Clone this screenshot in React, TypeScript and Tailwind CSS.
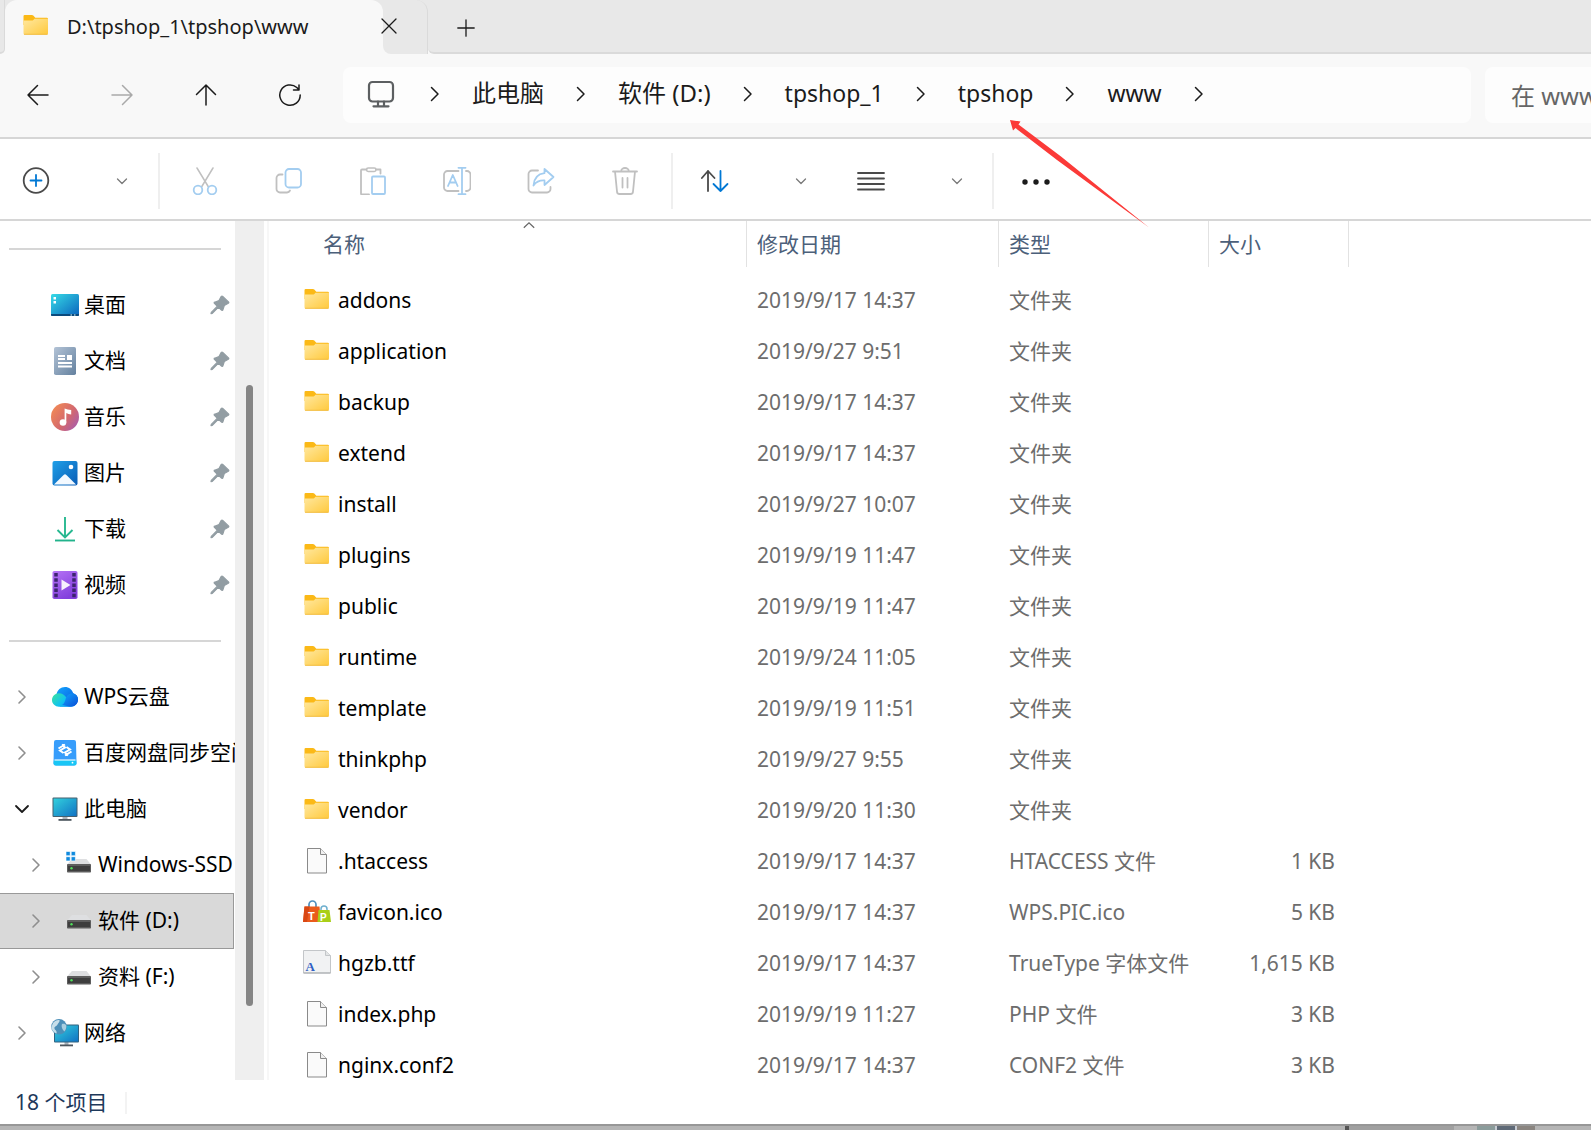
import type { ComponentType, ReactNode } from "react";

type IconProps = { className?: string };
type FileKind = "folder" | "blank" | "favicon" | "font";
type FileRow = { name: string; date: string; type: string; size?: string; kind: FileKind };
type TreeItem = { label: string; icon: ComponentType; state: "open" | "closed"; child?: boolean; selected?: boolean };

/* ---------- small line icons ---------- */

function Stroke({ children, size = 28, className = "text-[#1b1b1b]" }: { children: ReactNode; size?: number; className?: string }) {
  return (
    <svg
      width={size}
      height={size}
      viewBox={`0 0 ${size} ${size}`}
      fill="none"
      stroke="currentColor"
      strokeWidth="1.5"
      strokeLinecap="round"
      strokeLinejoin="round"
      className={`shrink-0 ${className}`}
      aria-hidden="true"
    >
      {children}
    </svg>
  );
}

function ChevronRight({ className }: IconProps) {
  return (
    <Stroke size={16} className={className}>
      <path d="M4.500 1.500 11 8l-6.500 6.500" />
    </Stroke>
  );
}

function ChevronDown({ className }: IconProps) {
  return (
    <Stroke size={16} className={className}>
      <path d="M3.500 6 8 10.500 12.500 6" strokeWidth="1.300" />
    </Stroke>
  );
}

function TreeChevron({ open }: { open: boolean }) {
  return open ? (
    <Stroke size={16} className="text-[#1b1b1b]">
      <path d="M2 5l6 6 6-6" strokeWidth="1.800" />
    </Stroke>
  ) : (
    <Stroke size={16} className="text-[#8f8f8f]">
      <path d="M5 2l6 6-6 6" strokeWidth="1.600" />
    </Stroke>
  );
}

/* ---------- coloured icons ---------- */

function FolderIcon() {
  return (
    <svg width="28" height="28" viewBox="0 2 28 28" className="shrink-0" aria-hidden="true">
      <defs>
        <linearGradient id="folder" x1="0" y1="0" x2="1" y2="1">
          <stop offset="0" stopColor="#ffe8a0" />
          <stop offset="1" stopColor="#ffc93c" />
        </linearGradient>
      </defs>
      <path d="M1.500 5.200a1.200 1.200 0 0 1 1.200-1.200h7.200c.6 0 1 .2 1.400.6l2 2.200h11.500a1.200 1.200 0 0 1 1.200 1.200V14h-24.500z" fill="#fbb917" />
      <path d="M1.500 9.500h8.200c.7 0 1.200-.2 1.700-.6l1-1.100h13.600v14.500a1.500 1.500 0 0 1-1.500 1.500h-21.500a1.500 1.500 0 0 1-1.500-1.500z" fill="url(#folder)" />
      <path d="M2 23.300h23.500" stroke="#f0b93e" strokeWidth=".8" />
    </svg>
  );
}

function BlankFileIcon() {
  return (
    <svg width="28" height="28" viewBox="0 1 28 28" className="shrink-0" aria-hidden="true">
      <path d="M4.500 1.500h13l6 6v18.500h-19z" fill="#fafafa" stroke="#8a8a8a" />
      <path d="M17.500 1.500v6h6" fill="#f0f0f0" stroke="#8a8a8a" />
    </svg>
  );
}

function FaviconIcon() {
  return (
    <svg width="28" height="28" viewBox="0 0 28 28" className="shrink-0" aria-hidden="true">
      <path d="M6 9V5.500a3.500 3.500 0 0 1 7 0V9" fill="none" stroke="#4f8fbd" strokeWidth="1.700" />
      <path d="M1.500 7.500h15l1.500 15.500H0z" fill="#ea5b1c" />
      <path d="M1.500 7.500h5L4 23H0z" fill="#d94713" />
      <path d="M18 12.500V10a3 3 0 0 1 6 0v2.500" fill="none" stroke="#6fb0cf" strokeWidth="1.500" />
      <path d="M15.500 11h11L28 23H14.500z" fill="#a9cf18" />
      <text x="5" y="20.500" fontFamily="Liberation Sans, sans-serif" fontWeight="700" fontSize="11" fill="#fff">T</text>
      <text x="17" y="21.500" fontFamily="Liberation Sans, sans-serif" fontWeight="700" fontSize="10" fill="#fff">P</text>
    </svg>
  );
}

function FontFileIcon() {
  return (
    <svg width="28" height="28" viewBox="0 2 28 28" className="shrink-0" aria-hidden="true">
      <path d="M.5 2.500h22l5 5v17.500H.5z" fill="#f1f2f3" stroke="#c3c6c9" />
      <path d="M22.500 2.500v5h5" fill="#e3e5e6" stroke="#c3c6c9" />
      <path d="M.5 25h27" stroke="#a5a8ab" />
      <text x="2.500" y="22.500" fontFamily="Liberation Serif, serif" fontWeight="700" fontSize="13" fill="#2f5fc4">A</text>
    </svg>
  );
}

function DesktopIcon() {
  return (
    <svg width="28" height="28" viewBox="0 0 28 28" aria-hidden="true">
      <defs>
        <linearGradient id="desktop" x1="0" y1="0" x2="1" y2="1">
          <stop offset="0" stopColor="#36dbe6" />
          <stop offset="1" stopColor="#0b63bd" />
        </linearGradient>
      </defs>
      <rect y="3" width="28" height="22" rx="1.500" fill="url(#desktop)" />
      <path d="M0 23h28v1a1 1 0 0 1-1 1H1a1 1 0 0 1-1-1z" fill="#0b4a7d" />
      <path d="M2.500 6H5v2.500H2.500zM2.500 10H5v2.500H2.500z" fill="#fff" />
      <path d="M19.500 23.500h1.500v1h-1.500zM23 23.500h1.500v1H23z" fill="#dff" />
    </svg>
  );
}

function DocumentIcon() {
  return (
    <svg width="28" height="28" viewBox="0 0 28 28" aria-hidden="true">
      <defs>
        <linearGradient id="document" x1="0" y1="0" x2="1" y2="1">
          <stop offset="0" stopColor="#b3c3d6" />
          <stop offset="1" stopColor="#64819f" />
        </linearGradient>
      </defs>
      <rect x="3" width="22" height="28" rx="1.800" fill="url(#document)" />
      <path d="M7 9h7M7 12h7M7 16h14M7 19.500h14" stroke="#fff" strokeWidth="1.800" />
      <rect x="16" y="8" width="5" height="5" fill="#fff" />
    </svg>
  );
}

function MusicIcon() {
  return (
    <svg width="28" height="28" viewBox="0 0 28 28" aria-hidden="true">
      <defs>
        <linearGradient id="music" x1="0" y1="0.200" x2="1" y2="0.900">
          <stop offset="0" stopColor="#f28a55" />
          <stop offset=".55" stopColor="#d3686e" />
          <stop offset="1" stopColor="#a35bb5" />
        </linearGradient>
      </defs>
      <circle cx="14" cy="14" r="14" fill="url(#music)" />
      <circle cx="12" cy="19.500" r="3.300" fill="#fff" />
      <path d="M13.600 19.500V5.500c2 .8 4 1.200 6.600 1.500v4.500c-2-.2-3.400-.7-4.900-1.500v9.500z" fill="#fff" />
    </svg>
  );
}

function PictureIcon() {
  return (
    <svg width="28" height="28" viewBox="0 0 28 28" aria-hidden="true">
      <defs>
        <linearGradient id="picture" x1="0" y1="0" x2="1" y2="1">
          <stop offset="0" stopColor="#1fa0e8" />
          <stop offset="1" stopColor="#0a5cb5" />
        </linearGradient>
      </defs>
      <rect x="1.500" y="2" width="25" height="24.500" rx="2" fill="url(#picture)" />
      <circle cx="20" cy="8" r="2.300" fill="#fff" />
      <path d="M3 25.500 12.600 16a2 2 0 0 1 2.800 0L25 25.500z" fill="#f3f9ff" />
    </svg>
  );
}

function DownloadIcon() {
  return (
    <svg width="28" height="28" viewBox="0 0 28 28" fill="none" strokeWidth="1.900" aria-hidden="true">
      <path d="M14 2v20.500M6.500 15l7.500 7.500 7.500-7.500" stroke="#27b890" />
      <path d="M4 25.500h20" stroke="#22b38c" />
    </svg>
  );
}

function VideoIcon() {
  return (
    <svg width="28" height="28" viewBox="0 0 28 28" aria-hidden="true">
      <defs>
        <linearGradient id="video" x1="0" y1="0" x2="0.500" y2="1">
          <stop offset="0" stopColor="#b573f5" />
          <stop offset="1" stopColor="#8340dd" />
        </linearGradient>
      </defs>
      <rect x="1.500" width="25" height="28" rx="1.800" fill="url(#video)" />
      <path d="M5 2v25M23 2v25" stroke="#3d2470" strokeWidth="3.500" strokeDasharray="3.500 1.700" />
      <path d="M10.500 8.500 19.500 14l-9 5.500z" fill="#f6effc" />
    </svg>
  );
}

function CloudIcon() {
  return (
    <svg width="28" height="28" viewBox="0 0 28 28" aria-hidden="true">
      <defs>
        <linearGradient id="cloud-l" x1="0" y1="0.200" x2="1" y2="0.800">
          <stop offset="0" stopColor="#35e0a8" />
          <stop offset=".5" stopColor="#12c3ee" />
          <stop offset="1" stopColor="#0b8dfb" />
        </linearGradient>
        <linearGradient id="cloud-r" x1="0" y1="0" x2="1" y2="1">
          <stop offset="0" stopColor="#12a5ff" />
          <stop offset="1" stopColor="#0a4fd6" />
        </linearGradient>
      </defs>
      <path d="M5.500 11.500C6.200 7 9.700 4 14 4c4 0 7.200 2.500 8.200 6.300 2.900.8 4.800 3.200 4.800 6.200 0 4-3 7-7 7H9z" fill="url(#cloud-r)" />
      <path d="M8 10.200c3 0 5 1.300 6.500 3.300l4.500 5.500c2 2.500 4 4 6 2.500-1.400 1.500-3 2.200-5 2.200H8C4.300 23.700 1 20.800 1 17s3-6.800 7-6.800z" fill="url(#cloud-l)" />
      <path d="M15 14.500c2-3.500 4.500-4.500 7.200-4.200 2.900.8 4.800 3.200 4.800 6.200 0 4-3 7-7 7-4.500 0-6-1.500-9-1.500 3-1.500 3.500-6 4-7.500z" fill="url(#cloud-r)" />
    </svg>
  );
}

function BaiduDriveIcon() {
  return (
    <svg width="28" height="28" viewBox="0 0 28 28" aria-hidden="true">
      <path d="M5 1h18a2 2 0 0 1 2 2l.5 21a2.500 2.500 0 0 1-2.500 2.500H5A2.500 2.500 0 0 1 2.500 24L3 3a2 2 0 0 1 2-2z" fill="#379dfb" />
      <path d="M3 21h22l.5 3a2.500 2.500 0 0 1-2.500 2.500H5A2.500 2.500 0 0 1 2.500 24z" fill="#19c6f5" />
      <path d="M3.500 21h21" stroke="#e9fbff" strokeWidth="1.200" />
      <circle cx="21.500" cy="23.700" r=".9" fill="#fff" />
      <path d="M11 5.500l3 3-5 3 3.500 2.500M17 16.500l-3-3 5-3-3.500-2.500M7.500 9.500l6.500-4M20.500 12.500l-6.500 4" fill="none" stroke="#fff" strokeWidth="2" />
    </svg>
  );
}

function ThisPcIcon() {
  return (
    <svg width="28" height="28" viewBox="0 0 28 28" aria-hidden="true">
      <defs>
        <linearGradient id="pc" x1="0" y1="0" x2="1" y2="1">
          <stop offset="0" stopColor="#32d0dd" />
          <stop offset="1" stopColor="#1173c4" />
        </linearGradient>
      </defs>
      <path d="M11.500 21h5v4h-5z" fill="#aab2ba" />
      <rect x="7.500" y="24" width="13" height="1.800" fill="#4d565e" />
      <rect x="1.500" y="2.500" width="25" height="19.500" rx="1" fill="#46606f" />
      <rect x="2.500" y="3.500" width="23" height="17.500" fill="url(#pc)" />
    </svg>
  );
}

function Drive() {
  return (
    <>
      <path d="M7 8h14.500l4.500 5.500H2z" fill="#dedfe1" />
      <rect x="2" y="13" width="24" height="8.500" rx=".8" fill="#5d5d5d" />
      <path d="M3 15h22v5H3z" fill="#3e3e3e" />
      <circle cx="6.500" cy="17.300" r="1.200" fill="#4ee05a" />
    </>
  );
}

function DriveIcon() {
  return (
    <svg width="28" height="28" viewBox="0 0 28 28" aria-hidden="true">
      <Drive />
    </svg>
  );
}

function SystemDriveIcon() {
  return (
    <svg width="28" height="28" viewBox="0 0 28 28" aria-hidden="true">
      <Drive />
      <path d="M1 .5h4.200v4.200H1zM6.200.5h4.200v4.200H6.200zM1 5.700h4.200v4.200H1zM6.200 5.700h4.200v4.200H6.200z" fill="#0f8ade" stroke="#fff" strokeWidth=".6" />
    </svg>
  );
}

function NetworkIcon() {
  return (
    <svg width="28" height="28" viewBox="0 0 28 28" aria-hidden="true">
      <path d="M13.500 23h4v3h-4z" fill="#aab2ba" />
      <rect x="9" y="25.500" width="13" height="1.800" fill="#4d565e" />
      <rect x="3" y="5.500" width="25" height="18" rx="1" fill="#31627f" />
      <rect x="4" y="6.500" width="23" height="16" fill="url(#pc)" />
      <circle cx="8" cy="7.800" r="7.800" fill="#4c8fb8" />
      <path d="M2 4c2-2.500 4-3.300 6.500-3 .5 2-1 2.500-2 4.500S3 7.500 3.500 9.500 6 11 5.500 14.500C2 13 .5 10.500.4 8z" fill="#c7dfea" />
      <path d="M11 5c2-.5 3.500 0 4.300 1.500.3 2-.5 4.500-2 6-1.500-1.500-3.500-4.500-2.300-7.500z" fill="#a9cfe0" />
    </svg>
  );
}

function PinIcon() {
  return (
    <svg width="20" height="20" viewBox="0 0 20 20" className="ml-auto shrink-0" aria-hidden="true">
      <path
        d="M11.300 1.400c.4-.5 1-.5 1.400-.1l5.800 5.600c.5.500.4 1.100-.2 1.400l-4 2.300-1.500 4.400c-.2.500-.7.600-1.100.2L8.500 12.200l-6.200 6.200-1.300.3.300-1.300 6.100-6.200-3-2.900c-.4-.4-.3-1 .2-1.100l4.400-1.600z"
        fill="#929da3"
        stroke="#929da3"
        strokeWidth="1.200"
        strokeLinejoin="round"
      />
    </svg>
  );
}

const fileIcons: Record<FileKind, ComponentType> = {
  folder: FolderIcon,
  blank: BlankFileIcon,
  favicon: FaviconIcon,
  font: FontFileIcon,
};

/* ---------- data ---------- */

const crumbs = ["此电脑", "软件 (D:)", "tpshop_1", "tpshop", "www"];

const pinned = [
  { label: "桌面", icon: DesktopIcon },
  { label: "文档", icon: DocumentIcon },
  { label: "音乐", icon: MusicIcon },
  { label: "图片", icon: PictureIcon },
  { label: "下载", icon: DownloadIcon },
  { label: "视频", icon: VideoIcon },
];

const tree: TreeItem[] = [
  { label: "WPS云盘", icon: CloudIcon, state: "closed" },
  { label: "百度网盘同步空间", icon: BaiduDriveIcon, state: "closed" },
  { label: "此电脑", icon: ThisPcIcon, state: "open" },
  { label: "Windows-SSD", icon: SystemDriveIcon, state: "closed", child: true },
  { label: "软件 (D:)", icon: DriveIcon, state: "closed", child: true, selected: true },
  { label: "资料 (F:)", icon: DriveIcon, state: "closed", child: true },
  { label: "网络", icon: NetworkIcon, state: "closed" },
];

const files: FileRow[] = [
  { name: "addons", date: "2019/9/17 14:37", type: "文件夹", kind: "folder" },
  { name: "application", date: "2019/9/27 9:51", type: "文件夹", kind: "folder" },
  { name: "backup", date: "2019/9/17 14:37", type: "文件夹", kind: "folder" },
  { name: "extend", date: "2019/9/17 14:37", type: "文件夹", kind: "folder" },
  { name: "install", date: "2019/9/27 10:07", type: "文件夹", kind: "folder" },
  { name: "plugins", date: "2019/9/19 11:47", type: "文件夹", kind: "folder" },
  { name: "public", date: "2019/9/19 11:47", type: "文件夹", kind: "folder" },
  { name: "runtime", date: "2019/9/24 11:05", type: "文件夹", kind: "folder" },
  { name: "template", date: "2019/9/19 11:51", type: "文件夹", kind: "folder" },
  { name: "thinkphp", date: "2019/9/27 9:55", type: "文件夹", kind: "folder" },
  { name: "vendor", date: "2019/9/20 11:30", type: "文件夹", kind: "folder" },
  { name: ".htaccess", date: "2019/9/17 14:37", type: "HTACCESS 文件", size: "1 KB", kind: "blank" },
  { name: "favicon.ico", date: "2019/9/17 14:37", type: "WPS.PIC.ico", size: "5 KB", kind: "favicon" },
  { name: "hgzb.ttf", date: "2019/9/17 14:37", type: "TrueType 字体文件", size: "1,615 KB", kind: "font" },
  { name: "index.php", date: "2019/9/19 11:27", type: "PHP 文件", size: "3 KB", kind: "blank" },
  { name: "nginx.conf2", date: "2019/9/17 14:37", type: "CONF2 文件", size: "3 KB", kind: "blank" },
];

/* ---------- sections ---------- */

function TabStrip() {
  return (
    <div className="flex h-[54px] shrink-0 bg-[#e8e8e8]">
      <div className="w-[5px] bg-[#f8f8f8]">
        <div className="h-full rounded-br-md border-r border-b-2 border-[#dadada] bg-[#e8e8e8]" />
      </div>
      <div className="flex w-[378px] items-center gap-[17px] rounded-t-xl bg-[#f8f8f8] pl-[17px]">
        <FolderIcon />
        <span className="text-[20px] leading-7 text-[#1b1b1b]">D:\tpshop_1\tpshop\www</span>
      </div>
      {/* close button straddles the right edge of the active tab */}
      <div className="relative w-[45px] bg-linear-to-b from-[#e8e8e8] from-50% to-[#f8f8f8] to-50%">
        <div className="h-full rounded-tr-xl rounded-bl-lg border-r border-[#dadada] bg-[#e8e8e8]" />
        <button type="button" aria-label="关闭标签页" className="absolute top-[18px] -left-0.5">
          <Stroke size={16}>
            <path d="M1 1l14 14M15 1 1 15" strokeWidth="1.300" />
          </Stroke>
        </button>
      </div>
      <div className="flex-1 bg-[#f8f8f8]">
        <div className="flex h-full items-center rounded-bl-md border-b-2 border-[#dadada] bg-[#e8e8e8] pt-1 pl-[29px]">
          <button type="button" aria-label="新建标签页">
            <Stroke size={18}>
              <path d="M9 .8v16.400M.8 9h16.400" strokeWidth="1.300" />
            </Stroke>
          </button>
        </div>
      </div>
    </div>
  );
}

function NavBar() {
  const button = "flex h-14 w-[76px] items-center justify-center";
  return (
    <div className="flex h-[85px] shrink-0 border-b-2 border-[#d6d6d6] bg-[#f8f8f8] pt-[13px]">
      <div className="flex w-[343px] shrink-0 gap-2">
        <button type="button" aria-label="后退" className={button}>
          <Stroke>
            <path d="M24 14H4M13.500 4.500 4 14l9.500 9.500" />
          </Stroke>
        </button>
        <button type="button" aria-label="前进" className={button} disabled>
          <Stroke className="text-[#a9a9a9]">
            <path d="M4 14h20M14.500 4.500 24 14l-9.500 9.500" />
          </Stroke>
        </button>
        <button type="button" aria-label="向上" className={button}>
          <Stroke>
            <path d="M14 24V4M4.500 13.500 14 4l9.500 9.500" />
          </Stroke>
        </button>
        <button type="button" aria-label="刷新" className={button}>
          <Stroke>
            <path d="M24.200 14A10.200 10.200 0 1 1 20.800 6.500L23 8.800M23 4v5h-5.500" />
          </Stroke>
        </button>
      </div>

      <nav aria-label="路径" className="flex h-14 min-w-0 flex-1 items-center rounded-lg bg-[#fdfdfd] pb-0.5 pl-6">
        <Stroke className="text-[#5c5f61]">
          <rect x="2" y="2" width="24" height="19.500" rx="3.500" strokeWidth="2.200" />
          <path d="M11 21.500V26M17 21.500V26M6.500 26.300h15" strokeWidth="2.200" />
        </Stroke>
        <ChevronRight className="ml-8 text-[#1b1b1b]" />
        {crumbs.map((c) => (
          <div key={c} className="flex items-center">
            <a href="#" className={`px-[29px] pb-0.5 leading-9 whitespace-nowrap text-[#1b1b1b] ${/^[a-z]/.test(c) ? "text-[23px]" : "text-[24px]"}`}>
              {c}
            </a>
            <ChevronRight className="text-[#1b1b1b]" />
          </div>
        ))}
      </nav>

      <div className="ml-3.5 w-[106px] shrink-0 overflow-hidden">
        <input
          type="text"
          aria-label="搜索"
          placeholder="在 www 中搜索"
          className="h-14 w-[400px] rounded-lg bg-[#fdfdfd] pl-[26px] text-[24px] text-[#1b1b1b] outline-none placeholder:text-[#666666]"
        />
      </div>
    </div>
  );
}

function Separator() {
  return <div className="h-14 w-0.5 shrink-0 bg-[#efefef]" />;
}

function CommandBar() {
  const dim = "flex h-14 w-21 shrink-0 items-center justify-center text-[#c0c0c0]";
  return (
    <div className="flex h-[82px] shrink-0 items-center border-b-2 border-[#d6d6d6] bg-white pt-1">
      <button type="button" aria-label="新建" className="flex w-[158px] shrink-0 items-center gap-16 pl-[22px]">
        <Stroke className="text-[#4a4a4a]">
          <circle cx="14" cy="13.500" r="12.300" strokeWidth="1.800" />
          <path d="M14 8v11M8.500 13.500h11" stroke="#0078d4" strokeWidth="1.800" />
        </Stroke>
        <ChevronDown className="text-[#7a7a7a]" />
      </button>
      <Separator />
      <div className="flex w-[511px] shrink-0 pl-[3px]">
        <button type="button" aria-label="剪切" className={dim} disabled>
          <Stroke className="">
            <path d="M6 1l11.500 19M22 1 10.500 20" />
            <circle cx="7" cy="23" r="4.300" stroke="#a3cdf0" strokeWidth="1.800" />
            <circle cx="21" cy="23" r="4.300" stroke="#a3cdf0" strokeWidth="1.800" />
          </Stroke>
        </button>
        <button type="button" aria-label="复制" className={dim} disabled>
          <Stroke className="">
            <path d="M7.500 7.500H5A3.500 3.500 0 0 0 1.500 11v11A3.500 3.500 0 0 0 5 25.500h7a3.500 3.500 0 0 0 3-2" strokeWidth="1.800" />
            <rect x="10.500" y="2" width="15.500" height="18.500" rx="3.500" stroke="#a3cdf0" strokeWidth="1.800" />
          </Stroke>
        </button>
        <button type="button" aria-label="粘贴" className={dim} disabled>
          <Stroke className="">
            <path d="M7.500 2.500H3a1 1 0 0 0-1 1v23a1 1 0 0 0 1 1h7M17 2.500h4.500v4" strokeWidth="1.800" />
            <rect x="7.500" y="1" width="9.500" height="3.500" rx="1.700" />
            <rect x="13" y="9.500" width="13" height="17.500" rx="1" stroke="#a3cdf0" strokeWidth="1.800" />
          </Stroke>
        </button>
        <button type="button" aria-label="重命名" className={dim} disabled>
          <Stroke className="">
            <path d="M15.500 4H4.500A3.500 3.500 0 0 0 1 7.500v13A3.500 3.500 0 0 0 4.500 24h11M23 4h1a3.500 3.500 0 0 1 3.500 3.500v13A3.500 3.500 0 0 1 24 24h-1" strokeWidth="1.800" />
            <path d="M5 19l4.800-11 4.800 11M6.700 15.500h6.200M15.500.8h7M15.500 27.200h7M19 .8v26.400" stroke="#a3cdf0" strokeWidth="1.800" />
          </Stroke>
        </button>
        <button type="button" aria-label="共享" className={dim} disabled>
          <Stroke className="">
            <path d="M11 3.500H5A3.500 3.500 0 0 0 1.500 7v15A3.500 3.500 0 0 0 5 25.500h15a3.500 3.500 0 0 0 3.500-3.500v-2" strokeWidth="1.800" />
            <path d="M17.500 2 26.500 10l-9 8v-4.500c-5-.3-8.500 1.500-11 5 .5-6.500 4-11.500 11-12.300z" stroke="#a3cdf0" strokeWidth="1.800" />
          </Stroke>
        </button>
        <button type="button" aria-label="删除" className={dim} disabled>
          <Stroke className="">
            <path d="M2 4.500h24M10.200 4.200a3.800 3.200 0 0 1 7.600 0M4 4.500l2 20a2.500 2.500 0 0 0 2.500 2.500h11a2.500 2.500 0 0 0 2.500-2.500l2-20M11.500 11v9.500M16.500 11v9.500" strokeWidth="1.800" />
          </Stroke>
        </button>
      </div>
      <Separator />
      <button type="button" aria-label="排序" className="flex w-[156px] shrink-0 items-center gap-16 pl-7">
        <Stroke className="text-[#4a4a4a]">
          <path d="M7 24V4M0.900 11l6.100-7 6.500 7" strokeWidth="1.800" />
          <path d="M19.500 4v20M12.500 17l7 7 7-7" stroke="#0078d4" strokeWidth="1.800" />
        </Stroke>
        <ChevronDown className="text-[#7a7a7a]" />
      </button>
      <button type="button" aria-label="查看" className="flex w-[163px] shrink-0 items-center gap-16 pl-7">
        <Stroke className="text-[#4a4a4a]">
          <path d="M1 6h26M1 11.500h26M1 17h26M1 22.500h26" strokeWidth="1.800" />
        </Stroke>
        <ChevronDown className="text-[#7a7a7a]" />
      </button>
      <Separator />
      <button type="button" aria-label="查看更多" className="pl-7">
        <Stroke>
          <g fill="currentColor" stroke="none">
            <circle cx="3" cy="15" r="2.700" />
            <circle cx="14" cy="15" r="2.700" />
            <circle cx="25" cy="15" r="2.700" />
          </g>
        </Stroke>
      </button>
    </div>
  );
}

function Divider() {
  return (
    <div className="flex h-14 items-center pr-3.5 pl-[9px]">
      <div className="h-0.5 w-full bg-[#d6d6d6]" />
    </div>
  );
}

function Sidebar() {
  return (
    <aside className="flex w-[264px] shrink-0 overflow-hidden">
      <div className="w-[235px] overflow-hidden">
        <Divider />
        {pinned.map(({ label, icon: Icon }) => (
          <a key={label} href="#" className="flex h-14 items-center gap-[5px] pr-[5px] pl-[51px] text-[21px] text-black">
            <Icon />
            {label}
            <PinIcon />
          </a>
        ))}
        <Divider />
        {tree.map(({ label, icon: Icon, state, child, selected }) => (
          <a
            key={label}
            href="#"
            className={`flex h-14 items-center text-[21px] whitespace-nowrap text-black ${child ? "pl-7" : "pl-3.5"} ${
              selected ? "mr-px border-y border-r border-[#999999] bg-[#d9d9d9]" : ""
            }`}
          >
            <TreeChevron open={state === "open"} />
            <span className="mr-[5px] ml-[21px] shrink-0">
              <Icon />
            </span>
            {label}
          </a>
        ))}
      </div>
      <div className="w-[29px] bg-[#efefef] pt-[164px]">
        <div className="mx-auto h-[621px] w-[7px] rounded-full bg-[#858585]" />
      </div>
    </aside>
  );
}

function HeaderCell({ label, className }: { label?: string; className: string }) {
  return (
    <th scope="col" className="p-0 pb-2 font-normal">
      <div className={`flex h-[46px] items-center pt-0.5 text-[21px] text-[#4c607a] ${className}`}>{label}</div>
    </th>
  );
}

function FileList() {
  return (
    <main className="ml-[3px] min-w-0 flex-1 overflow-hidden border-l-2 border-[#f7f7f7]">
      <div className="relative">
        <table className="w-full table-fixed border-collapse text-left text-[21px]">
          <colgroup>
            <col className="w-[478px]" />
            <col className="w-[252px]" />
            <col className="w-[210px]" />
            <col className="w-[140px]" />
            <col />
          </colgroup>
          <thead>
            <tr>
              <HeaderCell label="名称" className="border-r border-[#e2e2e2] pl-[54px]" />
              <HeaderCell label="修改日期" className="border-r border-[#e2e2e2] pl-2.5" />
              <HeaderCell label="类型" className="border-r border-[#e2e2e2] pl-2.5" />
              <HeaderCell label="大小" className="border-r border-[#e2e2e2] pl-2.5" />
              <td />
            </tr>
          </thead>
          <tbody>
            {files.map((f) => {
              const Icon = fileIcons[f.kind];
              return (
                <tr key={f.name} className="text-[#6d6d6d]">
                  <td className="p-0">
                    <a href="#" className="flex h-[51px] items-center gap-[7px] pl-[34px] text-black">
                      <Icon />
                      {f.name}
                    </a>
                  </td>
                  <td className="p-0 pl-2.5">{f.date}</td>
                  <td className="p-0 pl-2.5">{f.type}</td>
                  <td className="p-0 pr-3.5 text-right">{f.size}</td>
                  <td />
                </tr>
              );
            })}
          </tbody>
        </table>
        {/* ascending sort marker on the name column */}
        <svg width="12" height="8" viewBox="0 0 12 8" className="absolute top-0 left-[254px]" aria-hidden="true">
          <path d="M.8 6.800 6 1.800l5.200 5" fill="none" stroke="#666" strokeWidth="1.200" />
        </svg>
      </div>
    </main>
  );
}

function StatusBar() {
  return (
    <footer className="flex h-11 shrink-0 items-center bg-white pt-0.5 pl-[15px] text-[21px] text-[#1e395b]">
      <span>18 个项目</span>
      <span className="ml-[18px] h-[22px] w-0.5 bg-[#f3f3f3]" />
    </footer>
  );
}

/* sliver of the windows lying behind the bottom edge */
function BackgroundEdge() {
  return (
    <div className="flex h-1.5 shrink-0 border-t-2 border-[#979797] bg-[#b5b5b5]">
      <div className="flex-1" />
      <div className="w-1 bg-[#555555]" />
      <div className="w-[105px] bg-[#a0a0a0]" />
      <div className="w-[23px]" />
      <div className="w-[18px] bg-[#8b9c9b]" />
      <div className="w-0.5 bg-[#c8ccd4]" />
      <div className="w-[18px] bg-[#5f6a77]" />
      <div className="w-0.5 bg-[#c8ccd4]" />
      <div className="w-[18px] bg-[#8a8580]" />
      <div className="w-[56px]" />
    </div>
  );
}

export default function App() {
  return (
    <div className="relative flex h-screen flex-col overflow-hidden bg-white font-['Noto_Sans','Noto_Sans_CJK_SC',sans-serif]" lang="zh-CN">
      <TabStrip />
      <NavBar />
      <CommandBar />
      <div className="flex min-h-0 flex-1">
        <Sidebar />
        <FileList />
      </div>
      <StatusBar />
      <BackgroundEdge />

      {/* red annotation arrow */}
      <svg width="140" height="109" viewBox="0 0 140 109" className="pointer-events-none absolute top-[120px] left-[1010px]" aria-hidden="true">
        <path d="M0 0 10.500 1.500 8.500 4.500 51 36.500 139 107.500 47 40 5.500 8 3 10.500z" fill="#fb3a38" />
      </svg>
    </div>
  );
}
